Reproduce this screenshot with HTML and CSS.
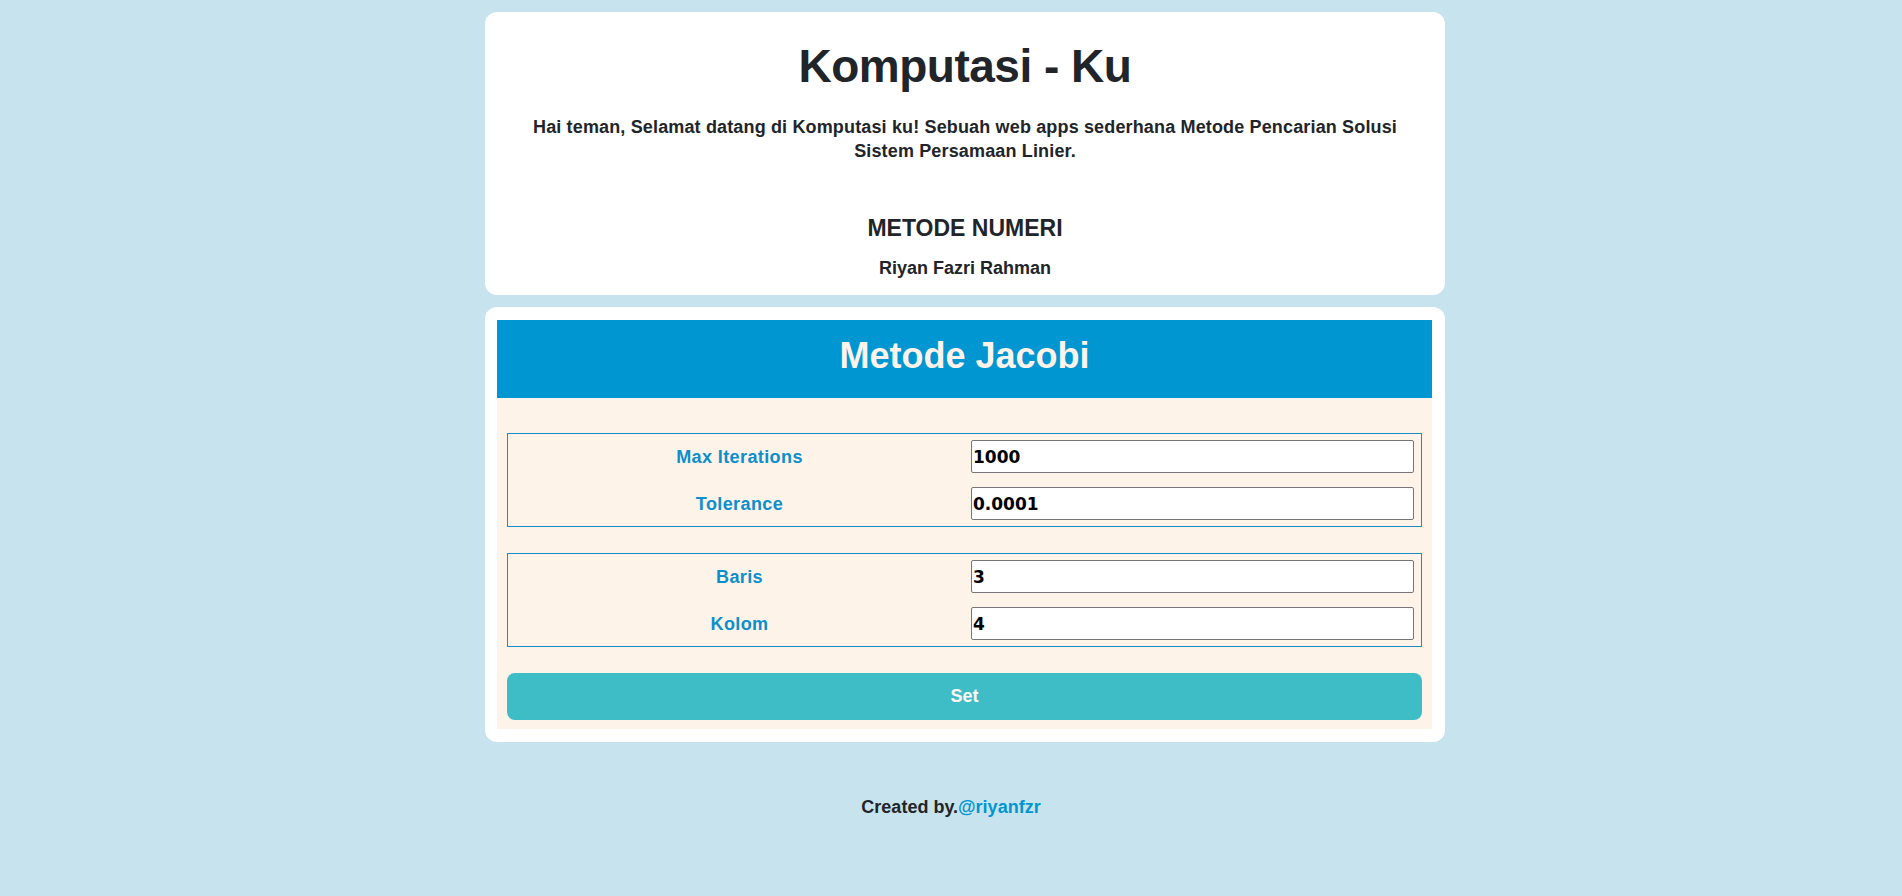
FILE: index.html
```html
<!DOCTYPE html>
<html lang="id">
<head>
<meta charset="utf-8">
<title>Komputasi - Ku</title>
<link rel="stylesheet" href="styles.css">
</head>
<body>
<div class="page">
  <main class="container">
    <section class="card intro">
      <h1 class="title">Komputasi - Ku</h1>
      <p class="lead">Hai teman, Selamat datang di Komputasi ku! Sebuah web apps sederhana Metode Pencarian Solusi Sistem Persamaan Linier.</p>
      <h3 class="course">METODE NUMERI</h3>
      <div class="author">Riyan Fazri Rahman</div>
    </section>
    <section class="card method">
      <header class="method-head">
        <h2 class="method-title">Metode Jacobi</h2>
      </header>
      <div class="method-body">
        <div class="field-box">
          <label class="field-label" for="maxit">Max Iterations</label>
          <input class="field-input" id="maxit" type="text" value="1000">
          <label class="field-label" for="tol">Tolerance</label>
          <input class="field-input" id="tol" type="text" value="0.0001">
        </div>
        <div class="field-box">
          <label class="field-label" for="rows">Baris</label>
          <input class="field-input" id="rows" type="text" value="3">
          <label class="field-label" for="cols">Kolom</label>
          <input class="field-input" id="cols" type="text" value="4">
        </div>
        <button class="set-btn" type="button">Set</button>
      </div>
    </section>
  </main>
  <footer class="footer">Created by.<a class="footer-link" href="#">@riyanfzr</a></footer>
</div>
</body>
</html>
```

FILE: styles.css
```css
* { box-sizing: border-box; }

html, body {
  margin: 0;
  padding: 0;
}

body {
  background: #c7e3ed;
  font-family: "Liberation Sans", Arial, sans-serif;
  font-weight: 700;
  color: #212529;
  min-height: 896px;
}

.page {
  display: flex;
  flex-direction: column;
  align-items: center;
  padding-top: 12px;
}

.container {
  width: 960px;
  margin-left: 28px;
  display: flex;
  flex-direction: column;
  gap: 12px;
}

.card {
  background: #ffffff;
  border-radius: 12px;
}

.intro {
  padding: 26px 12px 16px;
  text-align: center;
}

.title {
  margin: 0;
  font-size: 46px;
  line-height: 56px;
  font-weight: 700;
  letter-spacing: -0.5px;
}

.lead {
  margin: 21px auto 0;
  width: 890px;
  font-size: 18px;
  line-height: 24px;
  letter-spacing: 0.15px;
}

.course {
  margin: 52px 0 0;
  font-size: 23px;
  line-height: 26px;
  font-weight: 700;
}

.author {
  margin-top: 16px;
  font-size: 18px;
  line-height: 22px;
}

.method {
  padding: 13px 13px 13px 12px;
}

.method-head {
  background: #0096d1;
  height: 78px;
  padding-top: 12px;
  text-align: center;
}

.method-title {
  margin: 0;
  font-size: 36px;
  line-height: 48px;
  font-weight: 700;
  color: #fdf3ea;
}

.method-body {
  background: #fdf3e9;
  padding: 35px 10px 9px;
  display: flex;
  flex-direction: column;
  gap: 26px;
}

.field-box {
  border: 1px solid #1b8dc4;
  padding: 6px 7px 6px 0;
  display: grid;
  grid-template-columns: 1fr 443px;
  row-gap: 14px;
  align-items: center;
}

.field-label {
  text-align: center;
  color: #0d8fcc;
  font-size: 18px;
  line-height: 22px;
  letter-spacing: 0.4px;
}

.field-input {
  height: 33px;
  width: 443px;
  border: 1px solid #767676;
  border-radius: 2px;
  background: #ffffff;
  padding: 0 1px;
  font-family: "DejaVu Sans", Verdana, sans-serif;
  font-weight: 700;
  font-size: 17px;
  color: #000000;
}

.set-btn {
  height: 47px;
  border: none;
  border-radius: 8px;
  background: #3fbdc6;
  color: #fffaf3;
  font-family: "Liberation Sans", Arial, sans-serif;
  font-weight: 700;
  font-size: 18px;
}

.footer {
  margin-top: 54px;
  font-size: 18px;
  line-height: 22px;
  text-align: center;
}

.footer-link {
  color: #0096d1;
  text-decoration: none;
}
```
